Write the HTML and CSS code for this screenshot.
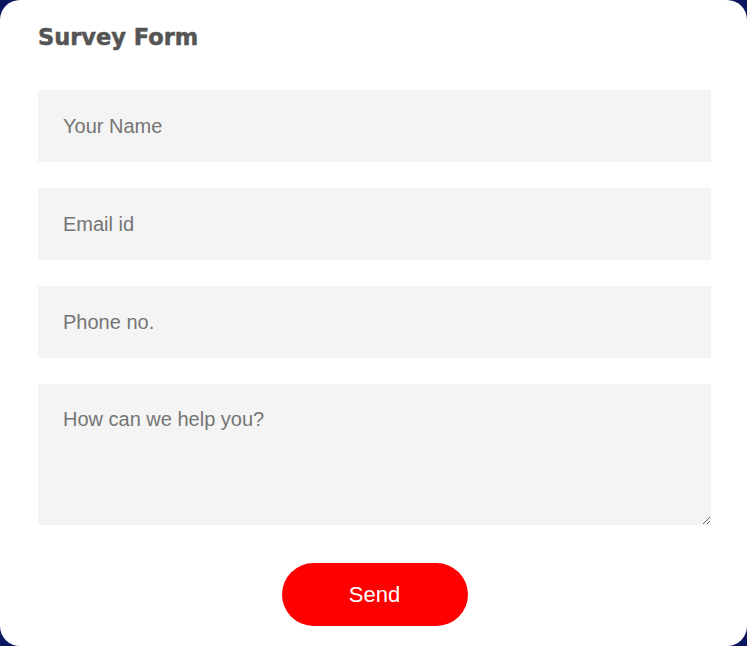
FILE: index.html
```html
<!DOCTYPE html>
<html lang="en">
<head>
<meta charset="utf-8">
<title>Survey Form</title>
<link rel="stylesheet" href="styles.css">
</head>
<body>
<div class="card">
  <h2 class="title">Survey Form</h2>
  <form class="form">
    <input class="field" type="text" placeholder="Your Name">
    <input class="field" type="email" placeholder="Email id">
    <input class="field" type="tel" placeholder="Phone no.">
    <textarea class="field area" placeholder="How can we help you?"></textarea>
    <div class="actions">
      <button class="send" type="button">Send</button>
    </div>
  </form>
</div>
</body>
</html>
```

FILE: styles.css
```css
html, body {
  margin: 0;
  padding: 0;
  background: #0b1660;
}
.card {
  box-sizing: border-box;
  width: 747px;
  height: 646px;
  background: #ffffff;
  border-radius: 20px;
  padding: 24px 36px 0 38px;
}
.title {
  margin: 0;
  font-family: "DejaVu Sans", sans-serif;
  font-weight: bold;
  font-size: 22.5px;
  color: #555555;
  -webkit-text-stroke: 0.5px #555555;
}
.form {
  margin-top: 40px;
  display: flex;
  flex-direction: column;
  gap: 26px;
}
.field {
  box-sizing: border-box;
  width: 100%;
  height: 72px;
  border: none;
  outline: none;
  background: #f4f4f4;
  padding: 0 25px;
  font-family: "Liberation Sans", Arial, sans-serif;
  font-size: 20px;
  color: #333;
  margin: 0;
  display: block;
}
.field::placeholder {
  color: #757575;
}
.area {
  height: 141px;
  padding: 24px 25px;
  resize: vertical;
}
.actions {
  display: flex;
  justify-content: center;
  margin-top: 12px;
}
.send {
  width: 186px;
  height: 63px;
  border: none;
  border-radius: 32px;
  background: #ff0000;
  color: #ffffff;
  font-family: "Liberation Sans", Arial, sans-serif;
  font-size: 22px;
  cursor: pointer;
}
```
